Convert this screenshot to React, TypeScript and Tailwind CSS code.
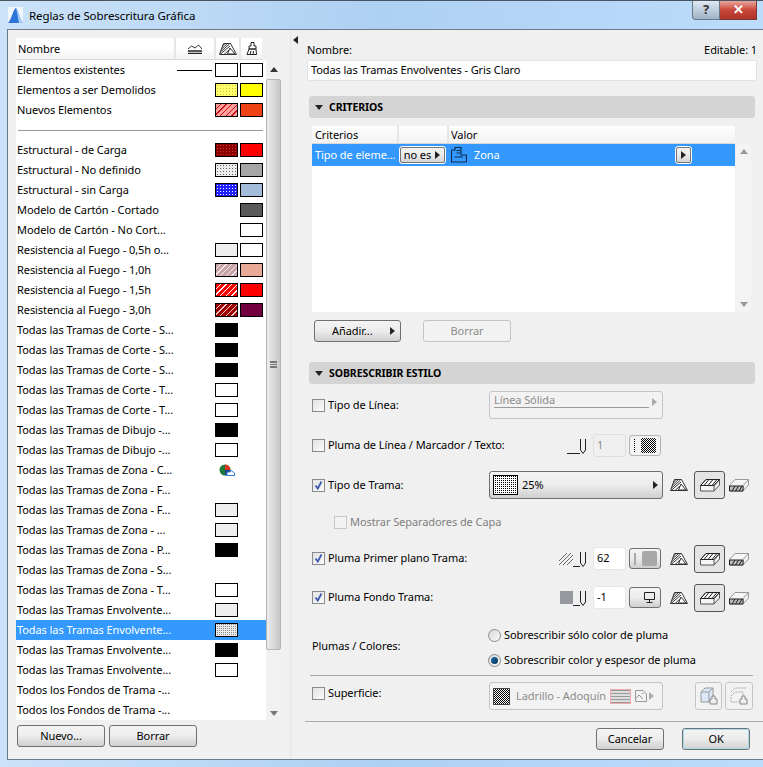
import type { ReactNode } from "react";

const checker = "bg-white bg-[conic-gradient(#000_25%,#fff_0_50%,#000_0_75%,#fff_0)] bg-[length:2px_2px]";

const swatches: Record<string, string> = {
    white: "bg-white",
    light: "bg-[#eeeeee]",
    black: "bg-black",
    yellow: "bg-[#ffff00]",
    orange: "bg-[#f04315]",
    red: "bg-[#ff0000]",
    gray: "bg-[#a6a6a6]",
    blue: "bg-[#a3bcd9]",
    dark: "bg-[#5a5a5a]",
    salmon: "bg-[#e8a996]",
    wine: "bg-[#720040]",
    yellowDots: "bg-[#ffff70] bg-[radial-gradient(#d8c020_0.7px,transparent_0.8px)] bg-[length:3px_3px]",
    redHatch: "bg-[repeating-linear-gradient(135deg,#ffa0a0_0_3px,#d01010_3px_4px)]",
    darkRedDots: "bg-[#8a0000] bg-[radial-gradient(#e03030_0.7px,transparent_0.8px)] bg-[length:3px_3px]",
    grayDots: "bg-[#ececec] bg-[radial-gradient(#666_0.6px,transparent_0.7px)] bg-[length:3px_3px]",
    blueCheck: "bg-[#2020ff] bg-[radial-gradient(#ffffff_0.7px,transparent_0.8px)] bg-[length:3px_3px]",
    pinkHatch: "bg-[repeating-linear-gradient(135deg,#c9a3a8_0_3px,#f4ecec_3px_4px)]",
    fireHatch: "bg-[repeating-linear-gradient(135deg,#ff0000_0_3px,#ffffff_3px_4px)]",
    wineHatch: "bg-[repeating-linear-gradient(135deg,#9c0000_0_3px,#f0c8c8_3px_4px)]",
    selDots: "bg-[conic-gradient(#888_25%,#ececec_0)] bg-[length:2px_2px]",
};

type Row = { name: string; a?: string; b?: string; line?: boolean; pie?: boolean; sel?: boolean; sep?: boolean };

const rows: Row[] = [
    { name: "Elementos existentes", a: "white", b: "white", line: true },
    { name: "Elementos a ser Demolidos", a: "yellowDots", b: "yellow" },
    { name: "Nuevos Elementos", a: "redHatch", b: "orange" },
    { name: "", sep: true },
    { name: "Estructural - de Carga", a: "darkRedDots", b: "red" },
    { name: "Estructural - No definido", a: "grayDots", b: "gray" },
    { name: "Estructural - sin Carga", a: "blueCheck", b: "blue" },
    { name: "Modelo de Cartón - Cortado", b: "dark" },
    { name: "Modelo de Cartón - No Cort...", b: "white" },
    { name: "Resistencia al Fuego - 0,5h o...", a: "light", b: "white" },
    { name: "Resistencia al Fuego - 1,0h", a: "pinkHatch", b: "salmon" },
    { name: "Resistencia al Fuego - 1,5h", a: "fireHatch", b: "red" },
    { name: "Resistencia al Fuego - 3,0h", a: "wineHatch", b: "wine" },
    { name: "Todas las Tramas de Corte - S...", a: "black" },
    { name: "Todas las Tramas de Corte - S...", a: "black" },
    { name: "Todas las Tramas de Corte - S...", a: "black" },
    { name: "Todas las Tramas de Corte - T...", a: "white" },
    { name: "Todas las Tramas de Corte - T...", a: "white" },
    { name: "Todas las Tramas de Dibujo -...", a: "black" },
    { name: "Todas las Tramas de Dibujo -...", a: "white" },
    { name: "Todas las Tramas de Zona - C...", pie: true },
    { name: "Todas las Tramas de Zona - F..." },
    { name: "Todas las Tramas de Zona - F...", a: "light" },
    { name: "Todas las Tramas de Zona - ...", a: "light" },
    { name: "Todas las Tramas de Zona - P...", a: "black" },
    { name: "Todas las Tramas de Zona - S..." },
    { name: "Todas las Tramas de Zona - T...", a: "white" },
    { name: "Todas las Tramas Envolvente...", a: "light" },
    { name: "Todas las Tramas Envolvente...", a: "selDots", sel: true },
    { name: "Todas las Tramas Envolvente...", a: "black" },
    { name: "Todas las Tramas Envolvente...", a: "white" },
    { name: "Todos los Fondos de Trama -..." },
    { name: "Todos los Fondos de Trama -..." },
];

const btn = "flex items-center justify-center h-[22px] rounded-[3px] border border-[#707070] bg-gradient-to-b from-[#f4f4f4] via-[#ececec] to-[#cfcfcf] text-black";
const disabledBox = "rounded-[3px] border border-[#c4c4c4] bg-[#f2f2f2] text-[#8c8c8c]";
const field = "h-[23px] w-[33px] flex items-center pl-[3px] rounded-[3px] border border-[#dedede]";

function Tri({ dir = "right", color = "#333" }: { dir?: "right" | "left" | "up" | "down"; color?: string }) {
    const pts = { right: "1,0 6,4 1,8", left: "6,0 1,4 6,8", up: "0,6 4,1 8,6", down: "0,2 8,2 4,7" }[dir];
    const size = dir === "up" || dir === "down" ? "w-[8px] h-[8px]" : "w-[7px] h-[8px]";
    return (
        <svg viewBox={dir === "up" || dir === "down" ? "0 0 8 8" : "0 0 7 8"} className={`${size} shrink-0`}>
            <polygon points={pts} fill={color} />
        </svg>
    );
}

function Check({ on, off }: { on?: boolean; off?: boolean }) {
    return (
        <span className={`flex w-[13px] h-[13px] shrink-0 items-center justify-center border ${off ? "border-[#c8c8c8] bg-[#f2f2f2]" : "border-[#8a8a8a] bg-gradient-to-br from-[#e2e2e2] to-[#fbfbfb]"}`}>
            {on && (
                <svg viewBox="0 0 11 11" className="w-[11px] h-[11px]">
                    <path d="M2.5 5.5 L4.8 8.5 L8.5 1.5" fill="none" stroke="#3f5bb0" strokeWidth="1.8" />
                </svg>
            )}
        </span>
    );
}

function Radio({ on }: { on?: boolean }) {
    return (
        <span className="flex w-[13px] h-[13px] shrink-0 items-center justify-center rounded-full border border-[#8a8a8a] bg-gradient-to-br from-[#d8d8d8] to-[#fafafa]">
            {on && <span className="w-[7px] h-[7px] rounded-full bg-gradient-to-br from-[#1f6fb5] to-[#06324f]" />}
        </span>
    );
}

function SectionBar({ title }: { title: string }) {
    return (
        <div className="ml-[2px] w-[446px] h-[22px] flex items-center gap-[6px] pl-[6px] rounded-[3px] bg-[#d4d4d4] text-[10.5px] font-bold text-black">
            <Tri dir="down" color="#222" />
            <span className="pt-[1px]">{title}</span>
        </div>
    );
}

function PenIcon({ long }: { long?: boolean }) {
    if (long) {
        return (
            <svg viewBox="0 0 20 18" className="w-[20px] h-[18px] shrink-0">
                <path d="M0 16.5 H13 M13.5 2 V13 L16 16.5 L18.5 13 V2" fill="none" stroke="#222" strokeWidth="1" />
            </svg>
        );
    }
    return (
        <svg viewBox="0 0 14 18" className="w-[14px] h-[18px] shrink-0">
            <path d="M0 16.5 H7 M7.5 2 V13 L10 16.5 L12.5 13 V2" fill="none" stroke="#222" strokeWidth="1" />
        </svg>
    );
}

function SectionIcon() {
    return (
        <svg viewBox="0 0 18 12" className="w-[18px] h-[12px] shrink-0">
            <path d="M4.5 0.5 H11.5 L17.5 11.5 H0.5 Z" fill="#fff" stroke="#333" />
            <path d="M3.5 3 L6 0.5 M2.5 6 L8.5 0.5 M1.5 9 L10.5 1 M1 11.5 L11 3 M5 11.5 L10 7" stroke="#333" strokeWidth="1" />
            <path d="M11 5 L16 11 H8.5 Z" fill="#fff" stroke="#333" />
        </svg>
    );
}

function PrismIcon({ bottom }: { bottom?: boolean }) {
    return (
        <svg viewBox="0 0 20 14" className="w-[20px] h-[14px] shrink-0">
            <path d="M0.5 7.5 L6 1.5 H19.5 L14 7.5 V13 H0.5 Z M14 13 L19.5 7 V1.5" fill="#f6f6f6" stroke={bottom ? "#999" : "#555"} />
            {bottom ? (
                <path d="M0.5 8 H14 V13 H0.5 Z M3 13 L6 8 M6.5 13 L9.5 8 M10 13 L13 8" fill="#bbb" stroke="#222" />
            ) : (
                <path d="M0.5 7.5 L6 1.5 H19.5 L14 7.5 Z M4 7.5 L9 1.5 M8 7.5 L13 1.5 M12 7.5 L17 1.5" fill="none" stroke="#222" />
            )}
        </svg>
    );
}

function ModeIcons() {
    return (
        <div className="flex items-center ml-[7px]">
            <SectionIcon />
            <span className="ml-[6px] flex items-center justify-center w-[31px] h-[28px] rounded-[3px] border border-[#555] bg-[#e4e4e4]">
                <PrismIcon />
            </span>
            <span className="ml-[4px]"><PrismIcon bottom /></span>
        </div>
    );
}

function FormRow({ h, label, children }: { h: string; label: ReactNode; children?: ReactNode }) {
    return (
        <div className={`flex items-center pl-[5px] ${h}`}>
            <div className="w-[177px] flex items-center gap-[2px] whitespace-nowrap">{label}</div>
            {children}
        </div>
    );
}

function ListRow({ row }: { row: Row }) {
    if (row.sep) {
        return (
            <div className="h-[20px] flex items-center pl-[2px] pr-[3px]">
                <div className="w-full h-px bg-[#9a9a9a]" />
            </div>
        );
    }
    return (
        <div className={`h-[20px] flex items-center pl-[1px] ${row.sel ? "bg-[#3399ff] text-white" : "text-black"}`}>
            <span className="w-[160px] whitespace-nowrap">{row.name}</span>
            <span className="w-[35px] flex justify-end">
                {row.line && <span className="w-[35px] h-px bg-black" />}
            </span>
            <span className="w-[3px]" />
            <span className="w-[23px] flex justify-center">
                {row.a && <span className={`block w-[23px] h-[14px] border border-black ${swatches[row.a]}`} />}
                {row.pie && (
                    <svg viewBox="0 0 16 12" className="w-[16px] h-[12px]">
                        <circle cx="6" cy="6" r="5.5" fill="#1f7a3a" />
                        <path d="M6 6 V0.5 A5.5 5.5 0 0 1 11.5 6 Z" fill="#d8341f" />
                        <path d="M6 6 H11.5 A5.5 5.5 0 0 1 6 11.5 Z" fill="#1b3f8f" />
                        <path d="M8 11.5 V8 H11 L12 6.5 L15.5 9 V11.5 Z" fill="#fff" stroke="#2a7fd5" />
                    </svg>
                )}
            </span>
            <span className="w-[2px]" />
            <span className="w-[23px]">
                {row.b && <span className={`block w-[23px] h-[14px] border border-black ${swatches[row.b]}`} />}
            </span>
        </div>
    );
}

function ListScrollbar() {
    return (
        <div className="w-[15px] h-[660px] flex flex-col bg-[#f1f1f1]">
            <div className="h-[19px] flex items-center justify-center"><Tri dir="up" /></div>
            <div className="h-[571px] flex items-center justify-center rounded-[2px] border border-[#b5b5b5] bg-gradient-to-r from-[#ececec] to-[#c8c8c8]">
                <div className="w-[7px] h-[7px] border-y-2 border-[#777] flex items-center"><div className="w-full h-px bg-[#777]" /></div>
            </div>
            <div className="flex-1 flex items-end justify-center pb-[3px]"><Tri dir="down" color="#777" /></div>
        </div>
    );
}

function LeftPanel() {
    return (
        <div className="w-[282px] shrink-0 pl-[8px] pt-[8px] flex flex-col">
            <div className="w-[246px] h-[22px] flex items-center border-b border-[#d8d8d8] bg-gradient-to-b from-white via-white to-[#f2f2f2]">
                <span className="w-[158px] pl-[2px] pt-[1px]">Nombre</span>
                <span className="w-[40px] h-full flex items-center justify-center border-l-2 border-[#e6e6e6]">
                    <svg viewBox="0 0 14 10" className="w-[14px] h-[10px]">
                        <path d="M0 5 L3.5 2 L7 4 L10.5 1 L14 5" fill="none" stroke="#333" />
                        <path d="M0 7 H14 M0 9.5 H14" stroke="#222" strokeWidth="1.4" />
                    </svg>
                </span>
                <span className="w-[25px] h-full flex items-center justify-center border-l-2 border-[#e6e6e6]">
                    <SectionIcon />
                </span>
                <span className="w-[23px] h-full flex items-center justify-center border-l-2 border-[#e6e6e6]">
                    <svg viewBox="0 0 12 13" className="w-[12px] h-[13px]">
                        <path d="M5 0.5 H8 V4 H10 V7 H3 V4 H5 Z M3 7 L1 12.5 H10.5 L10 7 Z M4 12.5 L5 9 M7 12.5 L7.5 9" fill="#fff" stroke="#222" />
                    </svg>
                </span>
            </div>
            <div className="flex items-start">
                <div className="w-[250px] h-[660px] bg-white overflow-hidden">
                    {rows.map((r, i) => <ListRow key={i} row={r} />)}
                </div>
                <ListScrollbar />
            </div>
            <div className="flex gap-[4px] pl-[1px] mt-[5px]">
                <button className={`${btn} w-[88px]`}>Nuevo...</button>
                <button className={`${btn} w-[88px]`}>Borrar</button>
            </div>
        </div>
    );
}

function Splitter() {
    return (
        <div className="w-[17px] shrink-0 pt-[6px] pl-[1px] border-l border-[#e6e6e6]">
            <Tri dir="left" color="#222" />
        </div>
    );
}

function CriteriaTable() {
    return (
        <div className="ml-[5px] mt-[8px] flex">
            <div className="w-[423px] h-[186px] flex flex-col">
                <div className="h-[18px] flex items-center border-b border-[#d8d8d8] bg-gradient-to-b from-white to-[#f2f2f2]">
                    <span className="w-[85px] pl-[3px] pt-[1px]">Criterios</span>
                    <span className="w-[50px] h-full border-l-2 border-[#e6e6e6]" />
                    <span className="flex-1 h-full flex items-center pl-[2px] pt-[1px] border-l-2 border-[#e6e6e6]">Valor</span>
                </div>
                <div className="h-[22px] flex items-center bg-[#3399ff] text-white">
                    <span className="w-[87px] pl-[3px] whitespace-nowrap">Tipo de eleme...</span>
                    <span className={`${btn} !h-[18px] w-[47px] gap-[3px] border-white outline outline-[#777] -outline-offset-2`}>
                        no es <Tri color="#222" />
                    </span>
                    <svg viewBox="0 0 16 16" className="ml-[5px] w-[16px] h-[16px] shrink-0">
                        <path d="M0.5 3 H4 V0.5 H10 V8 H15.5 V15 H0.5 Z M5.5 3.5 H9 M5.5 6 H9 M3.5 10 H12" fill="none" stroke="#0e2a52" strokeWidth="1.2" />
                    </svg>
                    <span className="ml-[7px] w-[201px]">Zona</span>
                    <span className={`${btn} !h-[18px] w-[17px] border-white outline outline-[#777] -outline-offset-2`}>
                        <Tri color="#222" />
                    </span>
                </div>
                <div className="flex-1 bg-white" />
            </div>
            <div className="ml-[1px] mt-[18px] w-[15px] h-[168px] flex flex-col justify-between items-center py-[4px] bg-[#f3f3f3]">
                <Tri dir="up" color="#999" />
                <Tri dir="down" color="#999" />
            </div>
        </div>
    );
}

function RightPanel() {
    return (
        <div className="flex-1 flex flex-col">
            <div className="mt-[13px] w-[450px] h-[14px] flex items-center justify-between">
                <span>Nombre:</span>
                <span>Editable: 1</span>
            </div>
            <div className="mt-[3px] w-[450px] h-[21px] flex items-center pl-[3px] bg-white border border-[#e2e2e2] rounded-[2px]">
                Todas las Tramas Envolventes - Gris Claro
            </div>
            <div className="mt-[15px]"><SectionBar title="CRITERIOS" /></div>
            <CriteriaTable />
            <div className="mt-[8px] ml-[7px] flex items-center">
                <button className={`${btn} w-[87px] !justify-between pl-[17px] pr-[4px] border-[#555]`}>
                    <span>Añadir...</span>
                    <Tri color="#222" />
                </button>
                <button className={`${disabledBox} ml-[22px] w-[88px] h-[22px]`}>Borrar</button>
            </div>
            <div className="mt-[20px]"><SectionBar title="SOBRESCRIBIR ESTILO" /></div>

            <FormRow h="h-[42px]" label={<><Check /><span className="ml-[1px]">Tipo de Línea:</span></>}>
                <div className={`${disabledBox} w-[174px] h-[28px] flex flex-col px-[4px]`}>
                    <span>Línea Sólida</span>
                    <div className="flex items-center gap-[2px] -mt-[2px]">
                        <div className="flex-1 h-px bg-[#9a9a9a]" />
                        <div className="-mt-[10px]"><Tri color="#aaa" /></div>
                    </div>
                </div>
            </FormRow>

            <FormRow h="h-[39px]" label={<><Check /><span className="ml-[1px]">Pluma de Línea / Marcador / Texto:</span></>}>
                <div className="w-[174px] flex items-center justify-end">
                    <PenIcon long />
                    <span className={`${field} ml-[6px] text-[#8c8c8c]`}>1</span>
                    <span className="ml-[3px] mr-[2px] w-[32px] h-[21px] flex items-center justify-center gap-[6px] rounded-[3px] border border-[#b5b5b5] bg-[#f2f2f2]">
                        <span className="w-0 h-[13px] border-l border-dotted border-black" />
                        <span className={`w-[15px] h-[15px] ${checker}`} />
                    </span>
                </div>
            </FormRow>

            <FormRow h="h-[40px]" label={<><Check on /><span className="ml-[1px]">Tipo de Trama:</span></>}>
                <div className={`${btn} !h-[28px] w-[174px] !justify-start px-[3px]`}>
                    <span className="w-[25px] h-[20px] border border-black bg-white bg-[conic-gradient(#000_25%,#fff_0)] bg-[length:2px_2px]" />
                    <span className="ml-[4px] flex-1">25%</span>
                    <Tri color="#222" />
                </div>
                <ModeIcons />
            </FormRow>

            <div className="h-[35px] flex items-center gap-[3px] pl-[27px] text-[#808080]">
                <Check off />
                <span>Mostrar Separadores de Capa</span>
            </div>

            <FormRow h="h-[37px]" label={<><Check on /><span className="ml-[1px]">Pluma Primer plano Trama:</span></>}>
                <div className="w-[174px] flex items-center justify-end">
                    <svg viewBox="0 0 14 12" className="w-[14px] h-[12px] shrink-0">
                        <path d="M0 8 L8 0 M0 12 L12 0 M4 12 L14 2 M8 12 L14 6" stroke="#666" />
                    </svg>
                    <PenIcon />
                    <span className={`${field} ml-[6px] bg-white border-[#e6e6e6]`}>62</span>
                    <span className={`${btn} ml-[3px] mr-[2px] !h-[21px] w-[32px] gap-[6px]`}>
                        <span className="w-[2px] h-[12px] bg-[#a8a8a8]" />
                        <span className="w-[15px] h-[15px] rounded-[2px] bg-[#a8a8a8]" />
                    </span>
                </div>
                <ModeIcons />
            </FormRow>

            <FormRow h="h-[41px]" label={<><Check on /><span className="ml-[1px]">Pluma Fondo Trama:</span></>}>
                <div className="w-[174px] flex items-center justify-end">
                    <span className="w-[13px] h-[13px] bg-[#95989c]" />
                    <PenIcon />
                    <span className={`${field} ml-[6px] bg-white border-[#e6e6e6]`}>-1</span>
                    <span className={`${btn} ml-[3px] mr-[2px] !h-[21px] w-[32px] !justify-end pr-[4px]`}>
                        <svg viewBox="0 0 13 13" className="w-[13px] h-[13px]">
                            <path d="M1.5 1.5 H11.5 V8.5 H1.5 Z M6.5 8.5 V11.5 M3.5 11.5 H9.5" fill="none" stroke="#222" />
                        </svg>
                    </span>
                </div>
                <ModeIcons />
            </FormRow>

            <div className="h-[57px] flex items-center pl-[5px]">
                <span className="w-[176px]">Plumas / Colores:</span>
                <div className="flex flex-col gap-[11px] mt-[3px]">
                    <div className="h-[14px] flex items-center gap-[3px]"><Radio /><span>Sobrescribir sólo color de pluma</span></div>
                    <div className="h-[14px] flex items-center gap-[3px]"><Radio on /><span>Sobrescribir color y espesor de pluma</span></div>
                </div>
            </div>

            <div className="ml-[3px] w-[443px] h-px bg-[#a8a8a8]" />

            <div className="pl-[5px] h-[45px] flex items-start">
                <div className="w-[177px] flex items-center gap-[2px] pt-[9px]">
                    <Check /><span className="ml-[1px]">Superficie:</span>
                </div>
                <div className={`${disabledBox} mt-[6px] w-[174px] h-[28px] flex items-center pl-[3px] pr-[2px]`}>
                    <span className={`w-[17px] h-[17px] border border-[#444] ${checker}`} />
                    <span className="ml-[6px] whitespace-nowrap">Ladrillo - Adoquín</span>
                    <span className="ml-[4px] w-[21px] h-[15px] border border-[#f0a8a8] bg-[repeating-linear-gradient(0deg,#999_0_1px,#ddd_1px_3px)]" />
                    <svg viewBox="0 0 12 12" className="ml-[4px] w-[12px] h-[12px] shrink-0">
                        <path d="M0.5 0.5 H8 L11.5 4 V11.5 H0.5 Z M0.5 9 L4 5 L8 9 M7 3.5 H8.5" fill="none" stroke="#999" />
                    </svg>
                    <span className="ml-[1px]"><Tri color="#aaa" /></span>
                </div>
                <div className="mt-[6px] ml-[32px] flex gap-[3px]">
                    <span className={`${disabledBox} w-[27px] h-[28px] flex items-center justify-center`}>
                        <svg viewBox="0 0 18 18" className="w-[18px] h-[18px]">
                            <path d="M1 5 L5 1 H13 V11 L9 15 H1 Z" fill="#dbe8f7" stroke="#999" />
                            <path d="M1 5 H9 V15 M9 5 L13 1" fill="none" stroke="#999" />
                            <path d="M12 9 H15 V12 H17 V17 H10 V12 H12 Z" fill="#eee" stroke="#888" />
                        </svg>
                    </span>
                    <span className={`${disabledBox} w-[28px] h-[28px] flex items-center justify-center`}>
                        <svg viewBox="0 0 18 18" className="w-[18px] h-[18px]">
                            <path d="M1 5 L5 1 H16 M1 9 L5 5 H13 V11 L9 15 H1 Z" fill="none" stroke="#aaa" strokeDasharray="2 1" />
                            <path d="M12 9 H15 V12 H17 V17 H10 V12 H12 Z" fill="#eee" stroke="#888" />
                        </svg>
                    </span>
                </div>
            </div>

            <div className="-ml-[2px] w-[458px] h-px bg-[#a8a8a8]" />
            <div className="mt-[6px] flex justify-end w-[443px]">
                <button className={`${btn} w-[68px] border-[#555]`}>Cancelar</button>
                <button className={`${btn} ml-[18px] w-[68px] border-[#3a9ad9] outline outline-[#a5dcf5] -outline-offset-2`}>OK</button>
            </div>
        </div>
    );
}

export default function App() {
    return (
        <div className="w-[763px] h-[767px] overflow-hidden flex flex-col bg-gradient-to-r from-[#cbe2f8] via-[#aed0f2] to-[#bcdcfb] font-['Noto_Sans',sans-serif] text-[11px] tracking-[-0.08px] text-black">
            <div className="h-[29px] shrink-0 flex items-start border-t border-[#4a5560]">
                <div className="ml-[8px] mt-[6px] w-[15px] h-[16px] bg-white/70 flex items-end">
                    <svg viewBox="0 0 15 16" className="w-[15px] h-[16px]">
                        <path d="M0 16 C4 12 5 2 8 1 C10 3 12 12 15 16 Z" fill="#2f74d8" />
                        <path d="M8 1 C10 3 12 12 15 16 H11 C10 10 9 5 8 1 Z" fill="#a9cdf5" />
                    </svg>
                </div>
                <span className="ml-[6px] mt-[6px] text-[11.5px]">Reglas de Sobrescritura Gráfica</span>
                <div className="ml-auto mr-[6px] flex h-[19px]">
                    <span className="w-[28px] flex items-center justify-center rounded-bl-[4px] border border-t-0 border-[#6a7885] bg-gradient-to-b from-[#dfe9f3] to-[#9fb3c6] font-bold text-[13px] text-[#333]">?</span>
                    <span className="w-[37px] flex items-center justify-center border-b border-r border-[#7a3a34] bg-gradient-to-b from-[#e7a59c] via-[#c9473a] to-[#b0322a] font-bold text-[13px] text-white">✕</span>
                </div>
            </div>
            <div className="ml-[7px] h-[731px] shrink-0 flex border-t border-l border-b border-[#6d7a87] bg-[#f0f0f0]">
                <LeftPanel />
                <Splitter />
                <RightPanel />
            </div>
        </div>
    );
}
